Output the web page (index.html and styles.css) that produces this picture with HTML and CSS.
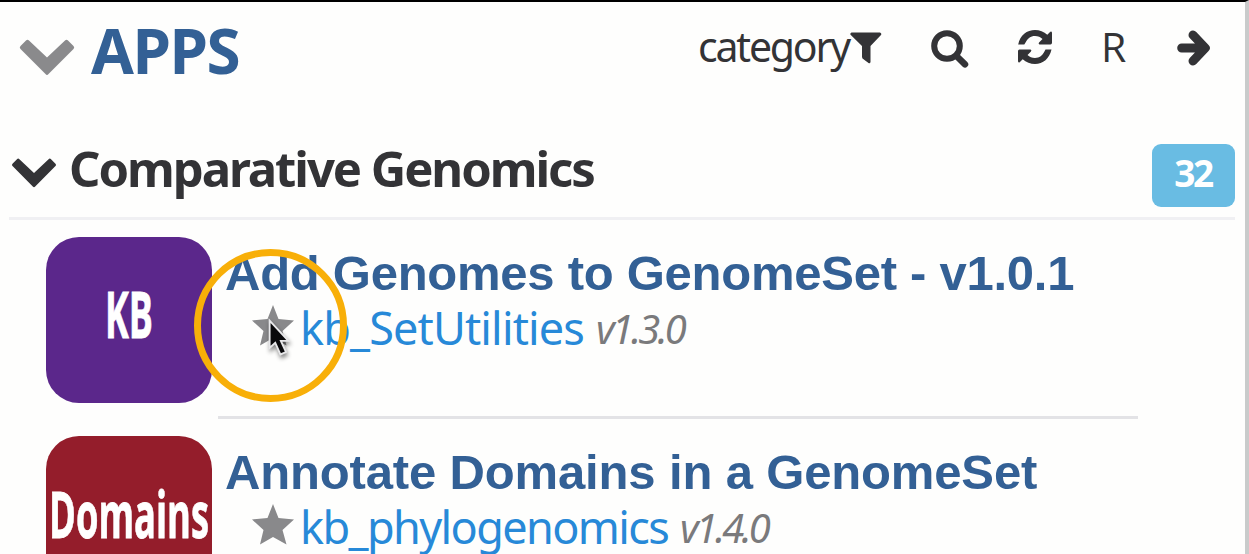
FILE: index.html
```html
<!DOCTYPE html>
<html lang="en">
<head>
<meta charset="utf-8">
<title>Apps</title>
<link rel="stylesheet" href="styles.css">
</head>
<body>
<main class="panel">
  <header class="bar">
    <svg class="bar-chevron" viewBox="0 0 56 37"><path d="M1.500 7 7 1.500Q8.500 0 10 1.500L28 18.500 46 1.500Q47.500 0 49 1.500L54.500 7Q56 8.500 54.500 10L29.500 35Q28 37 26.500 35L1.500 10Q0 8.500 1.500 7Z"/></svg>
    <h1 class="bar-title">APPS</h1>
    <nav class="tools">
      <span class="category">category</span>
      <svg class="filter" viewBox="0 0 32 32"><path d="M1.500 0.500H30Q32 1.500 31 3L20.500 14V30Q20 32 18.500 31L12.500 26.500 12 25V14L.8 3Q-.5 1.500 1.500.500Z"/></svg>
      <svg class="search" viewBox="0 0 38 38"><circle cx="16" cy="16" r="12.800" fill="none" stroke="#333336" stroke-width="6"/><path d="M25.500 26 34 34.300" stroke="#333336" stroke-width="6.500" stroke-linecap="round"/></svg>
      <svg class="refresh" viewBox="0 0 36 36"><path d="M1.200 15.500C3 6 10 1 18 1 22.500 1 27 2.700 30.300 5.800L33.300 2.800Q35 1.800 35 4V13.500Q35 15.500 33.500 15.500H22.500Q21 15 22 13.500L25.500 10C23.500 8 21 7 18 7 13.500 7 10.500 9.500 8.700 13.300L7.300 15.500ZM34.500 20.500C32.500 29.500 26 35 18 35 13.500 35 9 33.300 5.700 30.200L2.700 33.200Q1 34 1 32V22Q1 20.500 2.500 20.500H13.500Q15 21 14 22.500L10.500 26C12.500 28 15 29 18 29 22.500 29 25.500 26.500 27.300 22.800L28.500 20.500Z"/></svg>
      <span class="letter">R</span>
      <svg class="arrow" viewBox="0 0 34 36"><path d="M4.700 18H27M16 5 28.300 18 16 31" fill="none" stroke="#333336" stroke-width="9" stroke-linecap="round" stroke-linejoin="round"/></svg>
    </nav>
  </header>
  <section>
    <div class="group">
      <svg class="group-chevron" viewBox="0 0 56 37"><path d="M1.500 7 7 1.500Q8.500 0 10 1.500L28 18.500 46 1.500Q47.500 0 49 1.500L54.500 7Q56 8.500 54.500 10L29.500 35Q28 37 26.500 35L1.500 10Q0 8.500 1.500 7Z"/></svg>
      <h2 class="group-title">Comparative Genomics</h2>
      <span class="count">32</span>
    </div>
    <article class="app">
      <svg class="tile purple" viewBox="0 0 166 166"><text x="59" y="101" textLength="48" lengthAdjust="spacingAndGlyphs">KB</text></svg>
      <div class="info">
        <h3 class="name">Add Genomes to GenomeSet - v1.0.1</h3>
        <div class="meta">
          <svg class="star" viewBox="0 0 42 41"><path d="M21 0 26.500 14 42 15.500 30.500 26 34.500 40.500 21 33 8 40.500 11.500 26 0 15.500 15.500 14Z"/></svg>
          <a class="module">kb_SetUtilities</a><span class="version">v1.3.0</span>
        </div>
      </div>
      <div class="click-ring"></div>
      <svg class="pointer" viewBox="0 0 32 48"><path d="M6 5V34L12 28.500 17.500 41 23.500 38.500 18 26.500H26Z"/></svg>
    </article>
    <article class="app">
      <svg class="tile red" viewBox="0 0 166 166"><text x="3" y="102" textLength="160" lengthAdjust="spacingAndGlyphs">Domains</text></svg>
      <div class="info">
        <h3 class="name second">Annotate Domains in a GenomeSet</h3>
        <div class="meta">
          <svg class="star" viewBox="0 0 42 41"><path d="M21 0 26.500 14 42 15.500 30.500 26 34.500 40.500 21 33 8 40.500 11.500 26 0 15.500 15.500 14Z"/></svg>
          <a class="module phylo">kb_phylogenomics</a><span class="version">v1.4.0</span>
        </div>
      </div>
    </article>
  </section>
</main>
</body>
</html>
```
FILE: styles.css
```css
* { box-sizing: border-box; }
body { margin: 0; height: 554px; overflow: hidden; background: #fefefd; color: #333336; font-family: "Noto Sans", sans-serif; }
h1, h2, h3 { margin: 0; white-space: nowrap; }
svg { display: block; flex: none; fill: currentColor; }
.panel { height: 554px; overflow: hidden; border-top: 2px solid #000; border-right: 4px solid #c9cbcb; }
.bar { display: flex; height: 130px; padding-left: 19px; }
.bar-chevron { width: 56px; height: 37px; margin-top: 37px; color: #8a8a8c; }
.bar-title { margin: 8px 0 0 16px; font-size: 62px; line-height: 80px; letter-spacing: -1.500px; color: #336095; }
.tools { display: flex; align-items: flex-start; margin-left: auto; padding-right: 34px; }
.category, .letter { margin-top: 14px; font-size: 41px; line-height: 60px; }
.category { width: 152px; letter-spacing: -2.200px; }
.filter { width: 32px; height: 32px; margin-top: 30px; }
.search { width: 38px; height: 38px; margin: 28px 0 0 49px; }
.refresh { width: 36px; height: 36px; margin: 27px 0 0 48px; }
.letter { width: 28px; margin-left: 48px; font-family: "Open Sans", sans-serif; }
.arrow { width: 34px; height: 36px; margin: 28px 0 0 48px; }
.group { display: flex; height: 88px; margin: 0 10px 17px 9px; padding-left: 2px; border-bottom: 3px solid #f0f0f3; }
.group-chevron { width: 46px; height: 30px; margin-top: 26px; }
.group-title { margin: 2px 0 0 12px; font-size: 49px; line-height: 68px; letter-spacing: -2.050px; }
.count { width: 83px; height: 63px; margin: 12px 0 0 auto; padding-right: 1px; border-radius: 9px; background: #69bce3; color: #fff; font-size: 37px; font-weight: 700; line-height: 58px; text-align: center; letter-spacing: -2.500px; }
.app { position: relative; display: flex; height: 199px; padding-left: 46px; }
.tile { width: 166px; height: 166px; border-radius: 33px; }
.tile text { fill: #fff; stroke: #fff; stroke-width: .8px; font: 700 64px "Open Sans", sans-serif; }
.purple { background: #5b278b; }
.red { background: #941d2b; }
.info { width: 920px; height: 182px; margin-left: 6px; padding: 5px 0 0 7px; border-bottom: 3px solid #e3e3e6; }
.name { font: 700 49px/62px "Liberation Sans", Arial, sans-serif; color: #336095; letter-spacing: -.260px; }
.second { letter-spacing: -.150px; }
.meta { display: flex; align-items: flex-start; height: 60px; padding-left: 27px; white-space: nowrap; }
.star { width: 42px; height: 41px; margin-top: 1px; color: #89898b; }
.module { width: 289px; margin: -6px 7px 0 6px; font-size: 45px; line-height: 60px; letter-spacing: -.850px; color: #2789d8; }
.phylo { width: 373px; letter-spacing: -1.600px; }
.version { margin-top: -5px; font-size: 40px; font-style: italic; line-height: 60px; color: #7a7a7c; letter-spacing: -2.900px; }
.click-ring { position: absolute; left: 194px; top: 12px; width: 153px; height: 153px; border: 7px solid #f8af08; border-radius: 50%; }
.pointer { position: absolute; left: 264px; top: 79px; width: 30px; height: 45px; overflow: visible; fill: #09090b; stroke: #e8e8ea; stroke-width: 2; filter: drop-shadow(1px 3px 2px #0007); }
```
